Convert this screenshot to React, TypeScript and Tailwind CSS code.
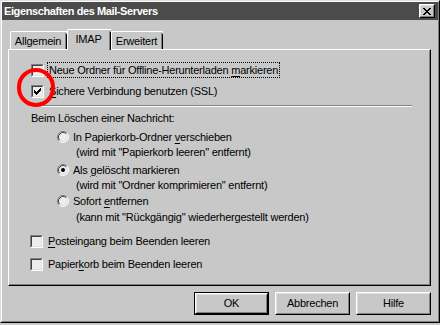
import React from "react";

const U = ({ children }: { children: React.ReactNode }) => (
  <span className="underline underline-offset-[2px] decoration-1">{children}</span>
);

function CheckBox({ checked }: { checked?: boolean }) {
  return (
    <div className="w-[13px] h-[13px] shrink-0 border border-t-[#808080] border-l-[#808080] border-b-white border-r-white">
      <div className="w-full h-full border border-t-[#404040] border-l-[#404040] border-b-[#dfdfdf] border-r-[#dfdfdf] bg-[#ededed] flex items-center justify-center">
        {checked && (
          <svg width="7" height="7" viewBox="0 0 7 7" shapeRendering="crispEdges">
            <rect x="6" y="0" width="1" height="1" fill="#000" />
            <rect x="5" y="1" width="2" height="1" fill="#000" />
            <rect x="0" y="2" width="1" height="1" fill="#000" />
            <rect x="4" y="2" width="3" height="1" fill="#000" />
            <rect x="0" y="3" width="2" height="1" fill="#000" />
            <rect x="3" y="3" width="3" height="1" fill="#000" />
            <rect x="0" y="4" width="5" height="1" fill="#000" />
            <rect x="1" y="5" width="3" height="1" fill="#000" />
            <rect x="2" y="6" width="1" height="1" fill="#000" />
          </svg>
        )}
      </div>
    </div>
  );
}

function Radio({ checked }: { checked?: boolean }) {
  return (
    <svg width="12" height="12" viewBox="0 0 12 12" className="shrink-0">
      <circle cx="6" cy="6" r="5" fill="#ededed" />
      <path d="M2.11 9.89 A5.5 5.5 0 0 1 9.89 2.11" stroke="#808080" strokeWidth="1" fill="none" />
      <path d="M9.89 2.11 A5.5 5.5 0 0 1 2.11 9.89" stroke="#ffffff" strokeWidth="1" fill="none" />
      <path d="M2.82 9.18 A4.5 4.5 0 0 1 9.18 2.82" stroke="#404040" strokeWidth="1" fill="none" />
      <path d="M9.18 2.82 A4.5 4.5 0 0 1 2.82 9.18" stroke="#dfdfdf" strokeWidth="1" fill="none" />
      {checked && <circle cx="6" cy="6" r="2" fill="#000" />}
    </svg>
  );
}

function Btn({ label, def }: { label: string; def?: boolean }) {
  return (
    <div className={def ? "w-[75px] h-[23px] border border-black" : "w-[75px] h-[23px]"}>
      <div className="w-full h-full border border-t-white border-l-white border-r-black border-b-black">
        <div className="w-full h-full border border-t-[#dfdfdf] border-l-[#dfdfdf] border-r-[#808080] border-b-[#808080] flex items-center justify-center">
          <span>{label}</span>
        </div>
      </div>
    </div>
  );
}

function Tab({ label, selected, w }: { label: string; selected?: boolean; w: string }) {
  if (selected) {
    return (
      <div className={`${w} h-[21px] -mb-px relative z-10 bg-[#c8c8c8] border-t border-l border-t-white border-l-white rounded-tl-[2px] flex`}>
        <div className="flex-1 flex items-start justify-center pt-[4px]">
          <span>{label}</span>
        </div>
        <div className="w-px bg-[#808080] mt-[1px]" />
        <div className="w-px bg-black mt-[2px]" />
      </div>
    );
  }
  return (
    <div className={`${w} h-[18px] bg-[#c8c8c8] border-t border-l border-t-white border-l-white rounded-tl-[2px] flex`}>
      <div className="flex-1 flex items-center justify-center pt-[2px]">
        <span>{label}</span>
      </div>
      <div className="w-px bg-[#808080] mt-[1px]" />
      <div className="w-px bg-black mt-[2px]" />
    </div>
  );
}

export default function App() {
  return (
    <div
      className="relative w-[440px] h-[325px] bg-[#c8c8c8] text-black text-[11px] leading-none tracking-[-0.22px]"
      style={{ fontFamily: '"Liberation Sans", Arial, sans-serif' }}
    >
      <div className="h-[323px] border border-t-[#dfdfdf] border-l-[#dfdfdf] border-r-black border-b-black">
        <div className="h-full border border-t-white border-l-white border-r-[#808080] border-b-[#808080] flex flex-col">
          {/* Title bar */}
          <div className="h-[18px] bg-[#4b4b4b] flex items-center justify-between pl-[2px] pr-[3px]">
            <span className="text-white font-bold text-[11px] tracking-[-0.4px]">Eigenschaften des Mail-Servers</span>
            <div className="w-[16px] h-[14px] border border-t-white border-l-white border-r-black border-b-black bg-[#c8c8c8]">
              <div className="w-full h-full border border-t-[#dfdfdf] border-l-[#dfdfdf] border-r-[#808080] border-b-[#808080] flex items-center justify-center">
                <svg width="8" height="7" viewBox="0 0 8 7" shapeRendering="crispEdges">
                  <path d="M0 0h2v1h-2zM6 0h2v1h-2zM1 1h2v1h-2zM5 1h2v1h-2zM2 2h4v1h-4zM3 3h2v1h-2zM2 4h4v1h-4zM1 5h2v1h-2zM5 5h2v1h-2zM0 6h2v1h-2zM6 6h2v1h-2z" fill="#000" />
                </svg>
              </div>
            </div>
          </div>

          <div className="pl-[6px] pr-[7px] mt-[9px] flex flex-col">
            {/* Tabs */}
            <div className="flex items-end h-[20px] pl-[2px]">
              <Tab label="Allgemein" w="w-[57px]" />
              <Tab label="IMAP" w="w-[44px]" selected />
              <Tab label="Erweitert" w="w-[52px]" />
            </div>

            {/* Panel */}
            <div className="h-[237px] border border-t-white border-l-white border-r-black border-b-black">
              <div className="h-full border-r border-b border-r-[#808080] border-b-[#808080] flex flex-col">
                <div className="mt-[12px] h-[16px] flex items-center pl-[22px]">
                  <CheckBox />
                  <div className="ml-[3px] h-[16px] border border-dotted border-black px-[1px] flex items-center">
                    <span>
                      Neue Ordner für Offline-Herunterladen <U>m</U>arkieren
                    </span>
                  </div>
                </div>
                <div className="mt-[5px] h-[16px] flex items-center pl-[22px]">
                  <CheckBox checked />
                  <div className="ml-[3px] h-[16px] border border-transparent px-[1px] flex items-center">
                    <span>
                      <U>S</U>ichere Verbindung benutzen (SSL)
                    </span>
                  </div>
                </div>
                <div className="mt-[6px] ml-[21px] w-[382px] h-[2px] border-t border-b border-t-[#808080] border-b-white" />
                <div className="mt-[4px] h-[14px] flex items-center pl-[22px]">
                  <span>Beim Löschen einer Nachricht:</span>
                </div>

                <div className="mt-[5px] h-[14px] flex items-center pl-[48px]">
                  <Radio />
                  <span className="ml-[4px]">
                    In Papierkorb-Ordner <U>v</U>erschieben
                  </span>
                </div>
                <div className="mt-[1px] h-[14px] flex items-center pl-[67px]">
                  <span>(wird mit "Papierkorb leeren" entfernt)</span>
                </div>

                <div className="mt-[4px] h-[14px] flex items-center pl-[48px]">
                  <Radio checked />
                  <span className="ml-[4px]">
                    Als <U>g</U>elöscht markieren
                  </span>
                </div>
                <div className="mt-[1px] h-[14px] flex items-center pl-[67px]">
                  <span>(wird mit "Ordner komprimieren" entfernt)</span>
                </div>

                <div className="mt-[2px] h-[14px] flex items-center pl-[48px]">
                  <Radio />
                  <span className="ml-[4px]">
                    Sofort <U>e</U>ntfernen
                  </span>
                </div>
                <div className="mt-[2px] h-[14px] flex items-center pl-[67px]">
                  <span>(kann mit "Rückgängig" wiederhergestellt werden)</span>
                </div>

                <div className="mt-[10px] h-[14px] flex items-center pl-[21px]">
                  <CheckBox />
                  <span className="ml-[5px]">
                    <U>P</U>osteingang beim Beenden leeren
                  </span>
                </div>
                <div className="mt-[9px] h-[14px] flex items-center pl-[21px]">
                  <CheckBox />
                  <span className="ml-[5px]">
                    Papier<U>k</U>orb beim Beenden leeren
                  </span>
                </div>
              </div>
            </div>

            {/* Buttons */}
            <div className="mt-[6px] flex justify-end gap-[6px]">
              <Btn label="OK" def />
              <Btn label="Abbrechen" />
              <Btn label="Hilfe" />
            </div>
          </div>
        </div>
      </div>

      {/* Red annotation circle */}
      <div className="absolute left-[17px] top-[68px] w-[38px] h-[39px] rounded-full border-[4px] border-[#ff0000]" />
    </div>
  );
}
